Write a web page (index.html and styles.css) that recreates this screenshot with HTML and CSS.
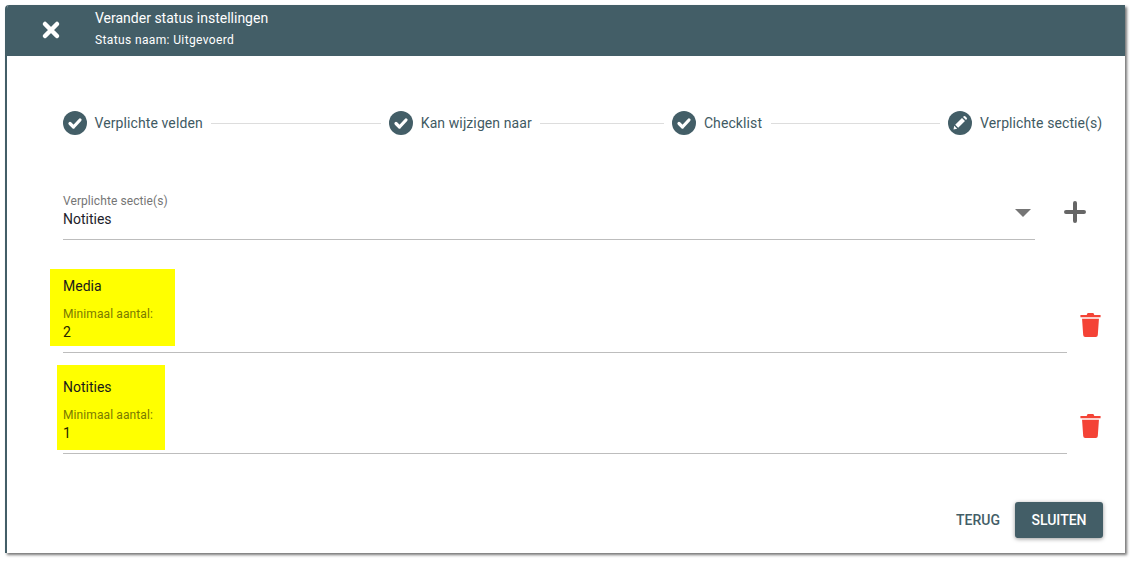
FILE: index.html
```html
<!DOCTYPE html>
<html lang="nl">

<head>
    <meta charset="UTF-8">
    <meta name="viewport" content="width=device-width, initial-scale=1.0">
    <link rel="stylesheet" href="styles.css">
    <title>Verander status instellingen</title>
</head>

<body>

    <div class="dialog">
        <div class="dialog-header">
            <svg class="close-icon" viewBox="0 0 20 20">
                <path d="M4 4 L16 16 M16 4 L4 16" />
            </svg>
            <div class="header-text">
                <div class="header-title">Verander status instellingen</div>
                <div class="header-sub">Status naam: Uitgevoerd</div>
            </div>
        </div>

        <div class="stepper">
            <div class="step">
                <span class="step-icon">
                    <svg viewBox="0 0 24 24"><path class="check" d="M7 12.500 L10.500 16 L17 9" /></svg>
                </span>
                <span class="step-label">Verplichte velden</span>
            </div>
            <div class="step-line line-1"></div>
            <div class="step">
                <span class="step-icon">
                    <svg viewBox="0 0 24 24"><path class="check" d="M7 12.500 L10.500 16 L17 9" /></svg>
                </span>
                <span class="step-label">Kan wijzigen naar</span>
            </div>
            <div class="step-line line-2"></div>
            <div class="step">
                <span class="step-icon">
                    <svg viewBox="0 0 24 24"><path class="check" d="M7 12.500 L10.500 16 L17 9" /></svg>
                </span>
                <span class="step-label">Checklist</span>
            </div>
            <div class="step-line line-3"></div>
            <div class="step">
                <span class="step-icon">
                    <svg viewBox="0 0 24 24">
                        <path class="pencil" d="M5.500 18.500 L6.200 14.800 L9.200 17.800 Z M7.200 13.800 L14 7 L17 10 L10.200 16.800 Z M15 6 L15.800 5.300 A1 1 0 0 1 17.200 5.300 L18.700 6.800 A1 1 0 0 1 18.700 8.200 L18 9 Z" />
                    </svg>
                </span>
                <span class="step-label">Verplichte sectie(s)</span>
            </div>
        </div>

        <div class="section-select">
            <div class="select-field">
                <div class="select-text">
                    <div class="select-label">Verplichte sectie(s)</div>
                    <div class="select-value">Notities</div>
                </div>
                <span class="select-arrow"></span>
            </div>
            <svg class="add-icon" viewBox="0 0 22 22">
                <path d="M11 2 V20 M2 11 H20" />
            </svg>
        </div>

        <div class="section-row row-media">
            <div class="section-info">
                <div class="marked marked-media">
                    <div class="section-name">Media</div>
                    <div class="section-label">Minimaal aantal:</div>
                    <div class="section-count">2</div>
                </div>
            </div>
            <svg class="trash-icon" viewBox="0.5 0 21 25">
                <path d="M8 0 H14 L15 2 H21.500 V4.500 H0.500 V2 H7 Z M2.200 6 H19.800 L18.600 23 Q18.500 25 16.500 25 H5.500 Q3.500 25 3.400 23 Z" />
            </svg>
        </div>

        <div class="section-row row-notes">
            <div class="section-info">
                <div class="marked marked-notes">
                    <div class="section-name">Notities</div>
                    <div class="section-label">Minimaal aantal:</div>
                    <div class="section-count">1</div>
                </div>
            </div>
            <svg class="trash-icon" viewBox="0.5 0 21 25">
                <path d="M8 0 H14 L15 2 H21.500 V4.500 H0.500 V2 H7 Z M2.200 6 H19.800 L18.600 23 Q18.500 25 16.500 25 H5.500 Q3.500 25 3.400 23 Z" />
            </svg>
        </div>

        <div class="dialog-actions">
            <button class="btn-back">TERUG</button>
            <button class="btn-close">SLUITEN</button>
        </div>
    </div>

</body>

</html>
```

FILE: styles.css
```css
html {
    height: 100%;
    background: #ffffff;
}

body {
    font-family: 'Roboto', sans-serif;
    background: #ffffff;
    margin: 0;
    padding: 5px 0 0 5px;
    box-sizing: border-box;
    height: 562px;
    overflow: hidden;
}

.dialog {
    box-sizing: border-box;
    width: 1120px;
    height: 548px;
    background: #ffffff;
    border-left: 2px solid #435e67;
    border-radius: 4px 0 0 0;
    box-shadow: 2px 2px 3px rgba(0, 0, 0, 0.55);
    overflow: hidden;
}

.dialog-header {
    display: flex;
    align-items: flex-start;
    height: 51px;
    background: #435e67;
    color: #ffffff;
}

.close-icon {
    width: 20px;
    height: 20px;
    margin: 15px 0 0 34px;
    fill: none;
    stroke: #ffffff;
    stroke-width: 4.5;
    stroke-linecap: round;
}

.header-text {
    margin-left: 34px;
}

.header-title {
    font-size: 14px;
    line-height: 16px;
    margin-top: 5px;
}

.header-sub {
    font-size: 12px;
    line-height: 14px;
    margin-top: 7px;
    letter-spacing: 0.37px;
}

.stepper {
    display: flex;
    align-items: center;
    height: 24px;
    margin: 55px 0 0 56px;
}

.step {
    display: flex;
    align-items: center;
    flex-shrink: 0;
}

.step-icon {
    width: 24px;
    height: 24px;
    border-radius: 50%;
    background: #435e67;
}

.step-icon svg {
    display: block;
    width: 24px;
    height: 24px;
}

.check {
    fill: none;
    stroke: #ffffff;
    stroke-width: 3.2;
    stroke-linecap: round;
    stroke-linejoin: round;
}

.pencil {
    fill: #ffffff;
}

.step-label {
    margin-left: 7.5px;
    font-size: 14px;
    letter-spacing: 0.1px;
    color: #3f5a63;
}

.step:last-child .step-label {
    margin-left: 8.5px;
}

.step-line {
    height: 1px;
    background: #dddddd;
    margin: 0 8px 0 8.5px;
}

.line-1 { width: 170px; }
.line-2 { width: 124px; }
.line-3 { width: 169px; }

.section-select {
    display: flex;
    align-items: flex-start;
    margin: 59px 0 0 56px;
}

.select-field {
    display: flex;
    align-items: flex-start;
    justify-content: space-between;
    box-sizing: border-box;
    width: 972px;
    height: 46px;
    border-bottom: 1px solid #bdbdbd;
}

.select-label {
    font-size: 12px;
    line-height: 14px;
    letter-spacing: 0.08px;
    color: #757575;
}

.select-value {
    font-size: 14px;
    line-height: 18px;
    margin-top: 2px;
    color: #1d1d2b;
}

.select-arrow {
    width: 0;
    height: 0;
    margin: 15px 4px 0 0;
    border-left: 8px solid transparent;
    border-right: 8px solid transparent;
    border-top: 8px solid #757575;
}

.add-icon {
    width: 22px;
    height: 22px;
    margin: 7px 0 0 29px;
    fill: none;
    stroke: #666666;
    stroke-width: 4;
    stroke-linecap: round;
}

.section-row {
    display: flex;
    align-items: flex-end;
    margin-left: 56px;
}

.row-media { margin-top: 29px; }
.row-notes { margin-top: 12px; }

.section-info {
    box-sizing: border-box;
    width: 1004px;
    height: 84px;
    border-bottom: 1px solid #bdbdbd;
}

.row-notes .section-info {
    height: 89px;
}

/* geel gemarkeerd in de schermafbeelding */
.marked {
    background: #ffff00;
    box-sizing: border-box;
}

.marked-media {
    width: 125px;
    height: 77px;
    margin-left: -13px;
    padding: 9px 0 0 13px;
}

.marked-notes {
    width: 108px;
    height: 85px;
    margin-left: -6px;
    padding: 14px 0 0 6px;
}

.section-name {
    font-size: 14px;
    line-height: 16px;
    color: #1a1a1a;
}

.section-label {
    font-size: 12px;
    line-height: 14px;
    margin-top: 13px;
    letter-spacing: 0.1px;
    color: #7a7a00;
}

.section-count {
    font-size: 14px;
    line-height: 16px;
    margin-top: 3px;
    color: #262600;
}

.trash-icon {
    width: 21px;
    height: 24px;
    margin: 0 0 16px 13px;
    fill: #f44336;
}

.dialog-actions {
    display: flex;
    justify-content: flex-end;
    align-items: center;
    margin: 48px 22px 0 0;
}

.dialog-actions button {
    font-family: inherit;
    font-size: 14px;
    font-weight: 500;
    border: none;
    border-radius: 3px;
    cursor: pointer;
}

.btn-back {
    background: none;
    color: #435e67;
    padding: 0;
    margin-right: 15px;
}

.btn-close {
    width: 88px;
    height: 36px;
    padding: 0;
    background: #435e67;
    color: #ffffff;
    box-shadow: 0 1px 4px rgba(0, 0, 0, 0.4);
}
```
